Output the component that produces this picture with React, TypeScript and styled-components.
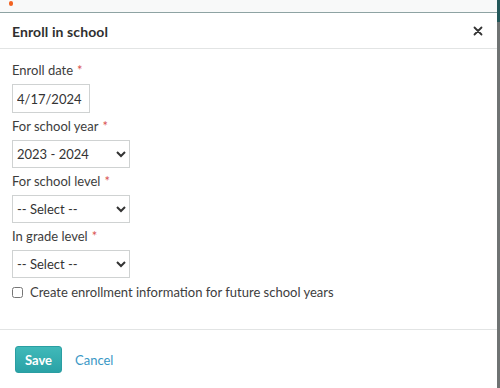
// npm
import React, { useState } from 'react';
import styled, { createGlobalStyle } from 'styled-components';

// styles
const GlobalStyle = createGlobalStyle`
	html,
	body {
		margin: 0;
		padding: 0;
		width: 500px;
		height: 388px;
		overflow: hidden;
		background: #ffffff;
	}

	* {
		box-sizing: border-box;
	}
`;

const styles = {
	page: {
		Page: styled.div`
			display: grid;
			grid-template-columns: 497px 3px;
			grid-template-rows: 12px 376px;
			width: 500px;
			height: 388px;
			font-family: Lato, 'Open Sans', sans-serif;
			color: #333333;
		`,

		Backdrop: styled.div`
			grid-column: 1 / 2;
			background: #f8f9f9;
			padding: 1px 0 0 9px;
		`,

		Dot: styled.span`
			display: block;
			width: 4px;
			height: 5px;
			border-radius: 2px;
			background: #f26322;
		`,

		Edge: styled.div`
			grid-row: 1 / 3;
			grid-column: 2 / 3;
			background: linear-gradient(#23585a 0, #23585a 22px, #6f7373 22px, #6f7373 100%);
		`,
	},

	dialog: {
		Dialog: styled.div`
			grid-column: 1 / 2;
			display: flex;
			flex-flow: column;
			background: #ffffff;
			border-top: 1px solid #8ea3a3;
		`,

		Header: styled.div`
			flex: 0 0 36px;
			display: flex;
			align-items: center;
			justify-content: space-between;
			padding: 1px 14px 0 12px;
			border-bottom: 1px solid #e2e4e4;
		`,

		Title: styled.div`
			font-weight: 700;
			font-size: 14px;
			letter-spacing: 0.1px;
			color: #2f2f2f;
		`,

		Close: styled.button`
			border: 0;
			padding: 0;
			background: transparent;
			width: 10px;
			height: 10px;
			display: flex;
			color: #333333;

			& > svg {
				width: 10px;
				height: 10px;
			}
		`,

		Body: styled.div`
			display: flex;
			flex-flow: column;
			padding: 12px 12px 28px;
		`,

		Footer: styled.div`
			display: flex;
			align-items: center;
			gap: 13px;
			padding: 16px 15px;
			border-top: 1px solid #e2e4e4;
		`,
	},

	form: {
		Field: styled.div`
			display: flex;
			flex-flow: column;
			align-items: flex-start;
			margin-bottom: 4px;
		`,

		Label: styled.label`
			font-size: 13px;
			line-height: 18px;
			color: #3d3d3d;
			margin-bottom: 5px;
		`,

		Required: styled.span`
			color: #d9534f;
			margin-left: 4px;
		`,

		Input: styled.input`
			width: 78px;
			height: 29px;
			padding: 0 4px;
			border: 1px solid #cfd2d2;
			font: 13px Lato, 'Open Sans', sans-serif;
			color: #333333;
		`,

		Select: styled.select`
			width: 118px;
			height: 28px;
			padding: 0;
			border: 1px solid #cfd2d2;
			border-radius: 0;
			background: #ffffff;
			font: 13px Lato, 'Open Sans', sans-serif;
			color: #333333;
		`,

		Check: styled.label`
			display: flex;
			align-items: center;
			gap: 7px;
			margin-top: 1px;
			font-size: 13px;
			line-height: 18px;
			color: #3d3d3d;

			& > input {
				margin: 0;
				width: 11px;
				height: 11px;
			}
		`,
	},

	buttons: {
		Save: styled.button`
			width: 47px;
			height: 27px;
			border: 1px solid #2a9ea2;
			border-radius: 3px;
			background: linear-gradient(#40b9b9, #2aa2a6);
			color: #ffffff;
			font: 700 13px Lato, 'Open Sans', sans-serif;
		`,

		Cancel: styled.button`
			border: 0;
			padding: 0;
			background: transparent;
			color: #3a98c6;
			font: 13px Lato, 'Open Sans', sans-serif;
		`,
	},
};

// components
const Field = ({ label, children }: { label: string; children: React.ReactNode }) => {
	const { Field, Label, Required } = styles.form;

	return (
		<Field>
			<Label>
				{label}
				<Required>*</Required>
			</Label>
			{children}
		</Field>
	);
};

const App = () => {
	const { Page, Backdrop, Dot, Edge } = styles.page;
	const { Dialog, Header, Title, Close, Body, Footer } = styles.dialog;
	const { Input, Select, Check } = styles.form;
	const { Save, Cancel } = styles.buttons;

	const [date, setDate] = useState('4/17/2024');

	return (
		<>
			<GlobalStyle />
			<Page>
				<Backdrop>
					<Dot />
				</Backdrop>
				<Edge />

				<Dialog>
					<Header>
						<Title>Enroll in school</Title>
						<Close type='button' aria-label='Close'>
							<svg viewBox='0 0 10 10' fill='none' stroke='currentColor' strokeWidth='1.8' strokeLinecap='round'>
								<path d='M1.5 1.5l7 7M8.5 1.5l-7 7' />
							</svg>
						</Close>
					</Header>

					<Body>
						<Field label='Enroll date'>
							<Input value={date} onChange={(e) => setDate(e.currentTarget.value)} />
						</Field>

						<Field label='For school year'>
							<Select defaultValue='2023'>
								<option value='2023'>2023 - 2024</option>
							</Select>
						</Field>

						<Field label='For school level'>
							<Select defaultValue=''>
								<option value=''>-- Select --</option>
							</Select>
						</Field>

						<Field label='In grade level'>
							<Select defaultValue=''>
								<option value=''>-- Select --</option>
							</Select>
						</Field>

						<Check>
							<input type='checkbox' />
							Create enrollment information for future school years
						</Check>
					</Body>

					<Footer>
						<Save type='button'>Save</Save>
						<Cancel type='button'>Cancel</Cancel>
					</Footer>
				</Dialog>
			</Page>
		</>
	);
};

export default App;
